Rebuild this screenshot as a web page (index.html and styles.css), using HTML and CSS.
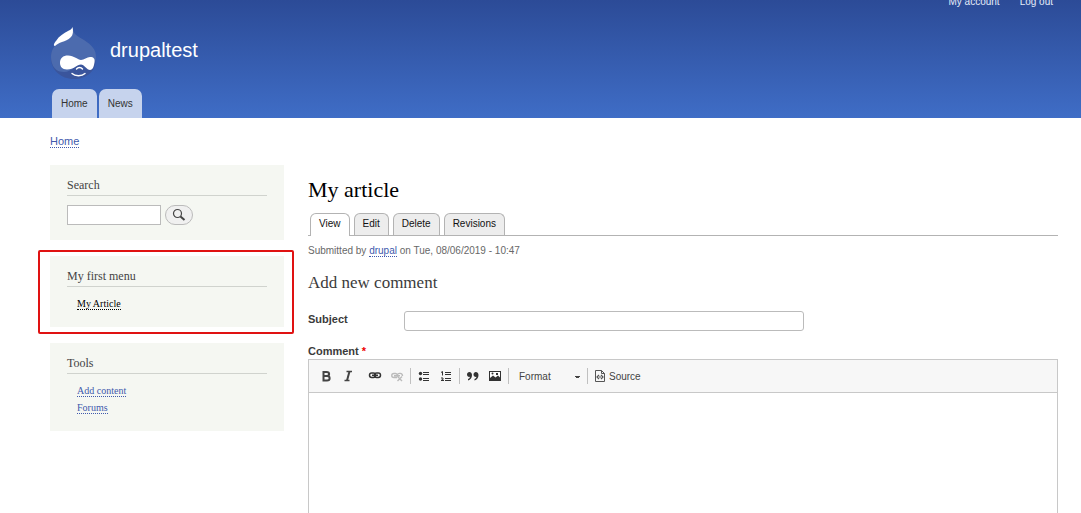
FILE: index.html
```html
<!DOCTYPE html>
<html lang="en">
<head>
  <meta charset="UTF-8">
  <meta name="viewport" content="width=device-width, initial-scale=1.0">
  <title>My article | drupaltest</title>
  <link rel="stylesheet" href="styles.css">
</head>
<body>

<header class="header">
  <nav class="account-menu" aria-label="User account menu">
    <a href="#">My account</a>
    <a href="#">Log out</a>
  </nav>
  <div class="branding">
    <a href="#" class="logo" aria-label="Home">
      <svg width="48" height="54" viewBox="0 0 48 54">
        <path fill="#3a559c" d="M22.500 1C23 8 27 10 34 14C42 19 46 25 46 33C46 45 37 53 24 53C11 53 1 44 1 32C1 24 5 18 11 14C17 10 21 8 22.500 1Z"/>
        <path fill="#4c6bae" d="M22.500 1C23 8 27 10 34 14C42 19 46 24 46 31C46 34 45 37 43 39C38 42 34 38 30 38C26 38 22 46 14 46C8 46 5 43 3 40C2 37 1 35 1 31C1 24 5 18 11 14C17 10 21 8 22.500 1Z"/>
        <path fill="#fff" d="M22.500 1C23.500 5 23 9 21 11C18 14 15 15 12 16C9 17 7 18 5 20C3 20 4 17 6 15C9 10 14 7 18 5C20 4 22 3 22.500 1Z"/>
        <path fill="#fff" d="M18 29.500C24 29.500 28 34 31 34C34 34 37 31 40 31C44 31 45 33 44.500 36C44 40 43 44 40 44C37 44 34 38.500 31 38.500C27 38.500 24 43.500 17 43.500C12 43.500 10 40 10 37C10 32 13 29.500 18 29.500Z"/>
        <path fill="none" stroke="#fff" stroke-width="1.400" stroke-linecap="round" d="M26.500 43C28 41 31 41 32.500 43M22 47.500C25 50.500 32 50.500 35 47.500"/>
      </svg>
    </a>
    <a href="#" class="site-name">drupaltest</a>
  </div>
  <nav class="main-menu" aria-label="Main navigation">
    <a href="#">Home</a>
    <a href="#">News</a>
  </nav>
</header>

<nav class="breadcrumb" aria-label="Breadcrumb">
  <a href="#" class="link">Home</a>
</nav>

<div class="layout">
  <aside class="sidebar">
    <section class="block">
      <h2>Search</h2>
      <form class="search-form">
        <input type="search" class="search-input" aria-label="Search">
        <button type="submit" class="search-button" aria-label="Search">
          <svg width="14" height="14" viewBox="0 0 14 14" fill="none" stroke="#444">
            <circle cx="5.5" cy="5.5" r="4" stroke-width="1.2"/>
            <path d="M8.500 8.500L12.500 12" stroke-width="2"/>
          </svg>
        </button>
      </form>
    </section>

    <section class="block highlighted">
      <h2>My first menu</h2>
      <ul class="menu">
        <li><a href="#" class="link active">My Article</a></li>
      </ul>
    </section>

    <section class="block">
      <h2>Tools</h2>
      <ul class="menu">
        <li><a href="#" class="link">Add content</a></li>
        <li><a href="#" class="link">Forums</a></li>
      </ul>
    </section>
  </aside>

  <main class="content">
    <h1>My article</h1>
    <nav class="tabs" aria-label="Tabs">
      <a href="#" class="tab active">View</a>
      <a href="#" class="tab">Edit</a>
      <a href="#" class="tab">Delete</a>
      <a href="#" class="tab">Revisions</a>
    </nav>
    <p class="submitted">Submitted by <a href="#" class="link">drupal</a> on Tue, 08/06/2019 - 10:47</p>

    <h2 class="comment-title">Add new comment</h2>
    <form class="comment-form">
      <div class="form-row">
        <label for="subject">Subject</label>
        <input type="text" id="subject" class="subject-input">
      </div>
      <label for="comment">Comment <span class="required">*</span></label>

      <div class="editor">
        <div class="toolbar">
          <div class="group">
            <button type="button" aria-label="Bold">
              <svg width="16" height="16" viewBox="0 0 16 16" fill="none" stroke="#444" stroke-width="2">
                <path d="M5.500 4H8.500C12 4 12 8 8.500 8H5.500M5.500 8H9C12.500 8 12.500 12.500 9 12.500H5.500M5.500 3V13.500"/>
              </svg>
            </button>
            <button type="button" aria-label="Italic">
              <svg width="16" height="16" viewBox="0 0 16 16" fill="none" stroke="#444">
                <path d="M9.500 3.500L7 12.500" stroke-width="2"/>
                <path d="M6.500 3.500H12M4.500 12.500H9.500" stroke-width="1.300"/>
              </svg>
            </button>
          </div>
          <div class="group links">
            <button type="button" aria-label="Link">
              <svg width="16" height="16" viewBox="0 0 16 16" fill="none" stroke="#333" stroke-width="1.500">
                <rect x="2.500" y="5" width="6" height="4.500" rx="2.200"/>
                <rect x="7.500" y="5" width="6" height="4.500" rx="2.200"/>
                <path d="M5 7.300H11"/>
              </svg>
            </button>
            <button type="button" aria-label="Unlink" disabled>
              <svg width="16" height="16" viewBox="0 0 16 16" fill="none" stroke="#bbb" stroke-width="1.400">
                <path d="M8 9.500H5C2 9.500 2 5.500 5 5.500H6.500C8.500 5.500 8.500 7.500 8 7.800H5M8 7.800H11M8.500 6.500C9 5 13.500 4.500 13.500 8M8.500 8.500L13 13M13 8.500L8.500 13"/>
              </svg>
            </button>
          </div>
          <div class="group">
            <button type="button" aria-label="Bulleted list">
              <svg width="16" height="16" viewBox="0 0 16 16" fill="#333">
                <circle cx="4.500" cy="5.500" r="1.700"/>
                <circle cx="4.500" cy="11" r="1.700"/>
                <path d="M7 4H13V5H7zM7 6H13V7H7zM7 10H13V11H7zM7 12H13V13H7z"/>
              </svg>
            </button>
            <button type="button" aria-label="Numbered list">
              <svg width="16" height="16" viewBox="0 0 16 16" fill="#333">
                <path d="M7 4H13V5H7zM7 6H13V7H7zM7 10H13V11H7zM7 12H13V13H7z"/>
                <path d="M3 4.500L4.500 3.500V7.500M3 10H5V11.500L3 12.500H6" fill="none" stroke="#333"/>
              </svg>
            </button>
          </div>
          <div class="group">
            <button type="button" aria-label="Block quote">
              <svg width="16" height="16" viewBox="0 0 16 16" fill="#333">
                <path d="M2 6.500C2 3 7 3 7 7C7 10 5.500 11.500 3 12.500V11C4.500 10.500 5 9.500 4.800 8.800C3.500 9.200 2 8.200 2 6.500ZM8.500 6.500C8.500 3 13.500 3 13.500 7C13.500 10 12 11.500 9.500 12.500V11C11 10.500 11.500 9.500 11.300 8.800C10 9.200 8.500 8.200 8.500 6.500Z"/>
              </svg>
            </button>
            <button type="button" aria-label="Image">
              <svg width="16" height="16" viewBox="0 0 16 16">
                <rect x="2.500" y="3.500" width="11" height="9" fill="#fff" stroke="#333"/>
                <path fill="#333" d="M3 12V10L6 7.500L8.500 9.500L11 7.500L13 9.500V12.500H3Z"/>
                <circle cx="5.500" cy="5.500" r="1" fill="#333"/>
                <path fill="#333" d="M9 5H11V7H9z"/>
              </svg>
            </button>
          </div>
          <div class="group">
            <select class="format" aria-label="Format">
              <option>Format</option>
            </select>
          </div>
          <div class="group">
            <button type="button" class="source">
              <svg width="12" height="14" viewBox="0 0 12 14" fill="none" stroke="#555">
                <path d="M1.500 1.500H7.500L10.500 4.500V12.500H1.500ZM7.500 1.500V4.500H10.500"/>
                <path d="M5 6L3 8L5 10M7 6L9 8L7 10M5 8H7" stroke-width="1.200"/>
              </svg>
              Source
            </button>
          </div>
        </div>
        <textarea id="comment" class="editor-body"></textarea>
      </div>
    </form>
  </main>
</div>

</body>
</html>
```
FILE: styles.css
```css
* {
  box-sizing: border-box;
}

body {
  margin: 0;
  background: #fff;
  color: #3b3b3b;
  font-family: "Liberation Sans", Arial, sans-serif;
  font-size: 11px;
}

h1, h2, p, ul {
  margin: 0;
  padding: 0;
}

h1, h2 {
  font-family: "Liberation Serif", Georgia, serif;
  font-weight: normal;
}

button, input, select, textarea {
  font-family: inherit;
}

.link {
  color: #4059ac;
  text-decoration: none;
  border-bottom: 1px dotted #4059ac;
}

/* Header */
.header {
  padding: 0 24px 0 50px;
  background: linear-gradient(#2c4b97, #3f6dc6);
  overflow: hidden;
}

.header a {
  text-decoration: none;
}

.account-menu {
  display: flex;
  justify-content: flex-end;
  gap: 20px;
  height: 16px;
  margin-top: -6px;
  padding-right: 4px;
  line-height: 16px;
}

.account-menu a {
  color: #e6ecf8;
  font-size: 10px;
}

.branding {
  display: flex;
  gap: 12px;
  margin-top: 16px;
}

.logo svg {
  display: block;
}

.branding .site-name {
  padding-top: 12px;
  color: #fff;
  font-size: 20px;
  line-height: 24px;
}

.main-menu {
  display: flex;
  gap: 2px;
  margin-top: 9px;
  padding-left: 2px;
}

.main-menu a {
  padding: 0 9px;
  border-radius: 7px 7px 0 0;
  background: #c6d3ed;
  color: #333;
  font-size: 10px;
  line-height: 29px;
}

.breadcrumb {
  padding: 17px 50px 0;
  line-height: 13px;
}

/* Columns */
.layout {
  display: flex;
  align-items: flex-start;
  gap: 24px;
  padding: 17px 23px 0 50px;
}

.sidebar {
  display: flex;
  flex-direction: column;
  gap: 16px;
  width: 24%;
  max-width: 234px;
  flex-shrink: 0;
}

.content {
  flex: 1;
  min-width: 0;
}

/* Sidebar blocks */
.block {
  padding: 12px 17px 15px;
  background: #f5f7f2;
}

.block h2 {
  padding-bottom: 2px;
  border-bottom: 1px solid #d0d3ce;
  color: #444;
  font-size: 12px;
  line-height: 16px;
}

.highlighted {
  position: relative;
}

.highlighted::after {
  content: "";
  position: absolute;
  inset: -6px -10px -7px -12px;
  border: 2px solid #e01212;
  border-radius: 2px;
  pointer-events: none;
}

.search-form {
  display: flex;
  gap: 4px;
  padding-top: 9px;
}

.search-input {
  width: 94px;
  height: 20px;
  border: 1px solid #bbb;
  background: #fff;
}

.search-button {
  display: flex;
  align-items: center;
  justify-content: center;
  width: 28px;
  height: 20px;
  padding: 0;
  border: 1px solid #bbb;
  border-radius: 10px;
  background: #f0f0f0;
}

.menu {
  padding: 8px 10px 0;
  list-style: none;
  font-family: "Liberation Serif", Georgia, serif;
  font-size: 10px;
  line-height: 17px;
}

.menu .active {
  color: #000;
  border-color: #000;
}

/* Article */
.content h1 {
  padding-top: 12px;
  color: #000;
  font-size: 22px;
  line-height: 26px;
}

.tabs {
  display: flex;
  gap: 4px;
  margin-top: 10px;
  padding-left: 2px;
  border-bottom: 1px solid #b3b3b3;
}

.tab {
  padding: 0 8px 2px;
  border: 1px solid #b3b3b3;
  border-bottom: 0;
  border-radius: 6px 6px 0 0;
  background: #ededed;
  color: #111;
  font-size: 10px;
  line-height: 19px;
  text-decoration: none;
}

.tab.active {
  margin-bottom: -1px;
  background: #fff;
}

.submitted {
  margin-top: 8px;
  color: #686868;
  font-size: 10px;
  line-height: 14px;
}

.comment-title {
  margin-top: 14px;
  font-size: 17px;
  line-height: 22px;
}

.comment-form label {
  font-weight: bold;
  line-height: 16px;
}

.form-row {
  display: flex;
  margin: 17px 0 12px;
}

.form-row label {
  width: 96px;
}

.subject-input {
  width: 400px;
  height: 20px;
  border: 1px solid #bbb;
  border-radius: 3px;
}

.required {
  color: #e00;
}

/* Editor */
.editor {
  border: 1px solid #c8c8c8;
}

.toolbar {
  display: flex;
  align-items: center;
  height: 33px;
  padding-left: 4px;
  border-bottom: 1px solid #c8c8c8;
  background: #f7f7f7;
}

.toolbar button {
  display: flex;
  align-items: center;
  padding: 0 3px;
  border: 0;
  background: none;
  color: #444;
}

.group {
  display: flex;
  align-items: center;
  height: 16px;
  padding: 0 2px;
}

.group + .group {
  border-left: 1px solid #c0c0c0;
}

.group + .links {
  margin-left: 1px;
  border-left: 0;
}

.format {
  width: 74px;
  padding: 0 8px;
  border: 0;
  appearance: none;
  background: linear-gradient(#444, #444) no-repeat 64px 5px / 5px 1px, linear-gradient(#444, #444) no-repeat 65px 6px / 3px 1px;
  color: #444;
  font-size: 10px;
}

.toolbar .source {
  gap: 3px;
  padding-left: 4px;
  font-size: 10px;
}

.editor-body {
  display: block;
  width: 100%;
  height: 200px;
  border: 0;
  resize: none;
}
```
